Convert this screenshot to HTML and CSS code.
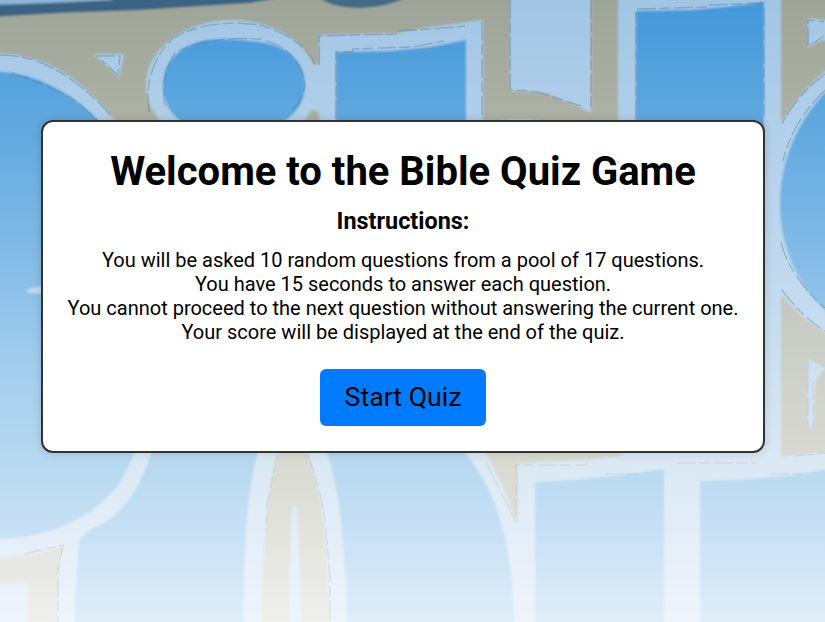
FILE: index.html
```html
<!DOCTYPE html>
<html lang="en">
<head>
<meta charset="utf-8">
<title>Bible Quiz Game</title>
<link rel="stylesheet" href="styles.css">
</head>
<body>
<svg class="backdrop" viewBox="0 0 825 622" preserveAspectRatio="none" aria-hidden="true">
  <defs>
    <linearGradient id="sky" gradientUnits="userSpaceOnUse" x1="0" y1="0" x2="0" y2="622">
      <stop offset="0" stop-color="#4398db"/><stop offset=".19" stop-color="#5fa8df"/><stop offset=".4" stop-color="#82bae6"/><stop offset=".6" stop-color="#a5ceee"/><stop offset=".75" stop-color="#b8d9f0"/><stop offset=".87" stop-color="#cbe1f5"/><stop offset="1" stop-color="#e0eef8"/>
    </linearGradient>
    <linearGradient id="rim" gradientUnits="userSpaceOnUse" x1="0" y1="0" x2="0" y2="622">
      <stop offset="0" stop-color="#a2c5e4"/><stop offset=".19" stop-color="#b0cfe9"/><stop offset=".5" stop-color="#c5dcf0"/><stop offset=".74" stop-color="#dae8f4"/><stop offset="1" stop-color="#f0f4fc"/>
    </linearGradient>
    <linearGradient id="stone" gradientUnits="userSpaceOnUse" x1="0" y1="0" x2="0" y2="622">
      <stop offset="0" stop-color="#9ea598"/><stop offset=".19" stop-color="#adb1a6"/><stop offset=".52" stop-color="#c8cbc4"/><stop offset=".75" stop-color="#d9dad3"/><stop offset="1" stop-color="#efefec"/>
    </linearGradient>
    <filter id="soft" filterUnits="userSpaceOnUse" x="-10" y="-10" width="845" height="642"><feGaussianBlur stdDeviation="1.2"/></filter>
    <filter id="fine" filterUnits="userSpaceOnUse" x="-10" y="-10" width="845" height="642"><feGaussianBlur stdDeviation=".7"/></filter>
  </defs>
  <g filter="url(#soft)">
    <path fill="url(#sky)" d="M-9-9H834V631H-9z"/>
    <path fill="url(#stone)" d="M-9-9H834V300H-9z"/>
    <!-- upper letters -->
    <path fill="#3e6484" d="M-9-9H320L250 3 140 10 60 13-9 17z"/>
    <path fill="#8fb6d6" d="M-9-9H110L112 0 50 3-9 5z"/>
    <path fill="#456a86" d="M318-3Q332 8 360 8Q385 8 408-3z"/>
    <path fill="url(#rim)" d="M-9 53Q20 53 50 65Q85 82 116 122L124 302H-9z"/>
    <path fill="url(#sky)" d="M-9 71Q25 72 50 85Q78 98 102 124L110 302H-9z"/>
    <path fill="url(#rim)" d="M93 54H124L119 78Q108 66 93 54z"/>
    <ellipse fill="url(#rim)" cx="232" cy="85" rx="86" ry="65"/>
    <path fill="url(#rim)" d="M319 35L397 33 430 27 483 20V130H319V112L304 107 302 67 319 64z"/>
    <path fill="url(#sky)" d="M163 85C163 61 181 45 206 40Q232 38 260 42C288 46 305 62 305 85C305 108 289 124 256 132H207C178 126 163 109 163 85z"/>
    <path fill="url(#sky)" d="M336 52L390 51 430 47 466 40V130H336z"/>
    <path fill="url(#rim)" d="M510-9H591V113Q570 102 550 95Q535 91 510 91z"/>
    <ellipse fill="url(#rim)" cx="520" cy="124" rx="25" ry="5"/>
    <path fill="url(#rim)" d="M618-9H781V500H618z"/>
    <path fill="url(#sky)" d="M636 11L690 10 725 7 764 2V130H636z"/>
    <path fill="url(#rim)" d="M808 18L834 21V39L819 41 808 48z"/>
    <!-- right side -->
    <path fill="url(#stone)" d="M781 270H834V452L781 457z"/>
    <path fill="url(#rim)" d="M834 64Q803 87 781 123V294Q801 320 834 338z"/>
    <path fill="url(#sky)" d="M834 84C762 149 762 260 834 319z"/>
    <path fill="url(#rim)" d="M808 359L826 369Q817 372 815 387L813 428H808z"/>
    <!-- lower left -->
    <path fill="url(#rim)" d="M135 450L152 450Q137 502 104 523Q84 531 80 539Q76 570 74 631H-9V540Q75 537 115 489Q129 471 135 450z"/>
    <path fill="url(#stone)" d="M-9 559Q30 558 63 546Q56 580 56 631H28V583L-9 586z"/>
    <path fill="url(#rim)" d="M244 631Q242 500 260 445H324Q345 495 347 631z"/>
    <path fill="url(#stone)" d="M262 631Q262 485 281 448H305Q329 500 329 631z"/>
    <path fill="url(#rim)" d="M289 631Q290 530 293 505H296Q300 535 301 631z"/>
    <!-- lower right -->
    <path fill="url(#rim)" d="M460 448H834V631H514Q514 503 460 448z"/>
    <path fill="url(#stone)" d="M482 448H622V456L585 460 518 464V524L512 512Q501 477 482 448z"/>
    <path fill="url(#stone)" d="M781 440H834V452L806 454 781 457z"/>
    <path fill="url(#sky)" d="M535 482Q595 480 664 469V631H535z"/>
    <path fill="url(#sky)" d="M700 481Q775 480 834 468V631H700z"/>
    <path fill="#dbe6ee" opacity=".7" d="M26 291Q34 286 46 287V294L30 293z"/>
  </g>
  <g class="grain" filter="url(#fine)">
    <path d="M0 55Q25 55 48 66Q82 82 112 117M12 73Q50 85 76 101L97 120M96 56H120L118 75L101 60"/>
    <path d="M149 112Q143 68 172 39Q205 18 260 25Q303 38 315 64M165 106Q160 75 175 53Q205 36 260 39Q299 48 305 84Q304 98 291 112"/>
    <path d="M319 65V36L396 34V31L431 29L465 26M336 119V52H353V49L412 47L444 41M482 22V119"/>
    <path d="M510 0V90Q540 91 550 96L581 106M591 0V108M636 119V9L708 7V5L764 3M764 8V119M808 46V20L824 22M810 45L824 36"/>
    <path d="M825 74Q795 97 782 124M825 90Q792 122 783 161M781 242Q789 276 825 308M782 290Q801 316 825 331"/>
  </g>
  <g class="grain grain-light" filter="url(#fine)">
    <path d="M24 554L63 545L58 570V622M277 455L267 505V530M308 455Q321 490 325 520L330 578V622"/>
    <path d="M485 460L516 522V465H587V462M605 474H638V471M677 463H756M770 474H803V471M795 456L825 453M808 360V427M813 382V428"/>
  </g>
</svg>
<main class="card">
  <h1 class="title">Welcome to the Bible Quiz Game</h1>
  <h2 class="subtitle">Instructions:</h2>
  <p class="rules">You will be asked 10 random questions from a pool of 17 questions.<br>You have 15 seconds to answer each question.<br>You cannot proceed to the next question without answering the current one.<br>Your score will be displayed at the end of the quiz.</p>
  <button class="start" type="button">Start Quiz</button>
</main>
</body>
</html>
```
FILE: styles.css
```css
* { box-sizing: border-box; }
body {
  display: flow-root;
  margin: 0;
  height: 622px;
  overflow: hidden;
  font-family: Roboto, sans-serif;
  color: #000;
}
.backdrop {
  position: absolute;
  inset: 0;
  width: 825px;
  height: 622px;
  z-index: -1;
}
.grain {
  fill: none;
  stroke: #526f89;
  stroke-width: 1.4;
  stroke-dasharray: 19 3 11 4;
  opacity: .36;
}
.grain-light { stroke: #aeb6bb; opacity: .3; }
.card {
  width: 724px;
  height: 333px;
  margin: 120px 0 0 41px;
  padding: 26px 0 0;
  display: flex;
  flex-direction: column;
  align-items: center;
  text-align: center;
  background: #fff;
  border: 2px solid #333;
  border-radius: 12px;
  box-shadow: 0 0 10px rgba(0, 0, 0, .15);
}
.title { margin: 0; font-size: 40px; line-height: 48px; font-weight: 700; white-space: nowrap; }
.subtitle { margin: 11px 0 0; font-size: 23.4px; line-height: 28px; font-weight: 700; }
.rules { margin: 13px 0 0; font-size: 20px; line-height: 24px; white-space: nowrap; }
.start {
  width: 166px;
  height: 57px;
  margin: 25px 0 0;
  padding: 0 0 2px;
  border: 0;
  border-radius: 6px;
  background: #007bff;
  color: #000;
  font: 400 26.67px/30px Roboto, sans-serif;
}
```
